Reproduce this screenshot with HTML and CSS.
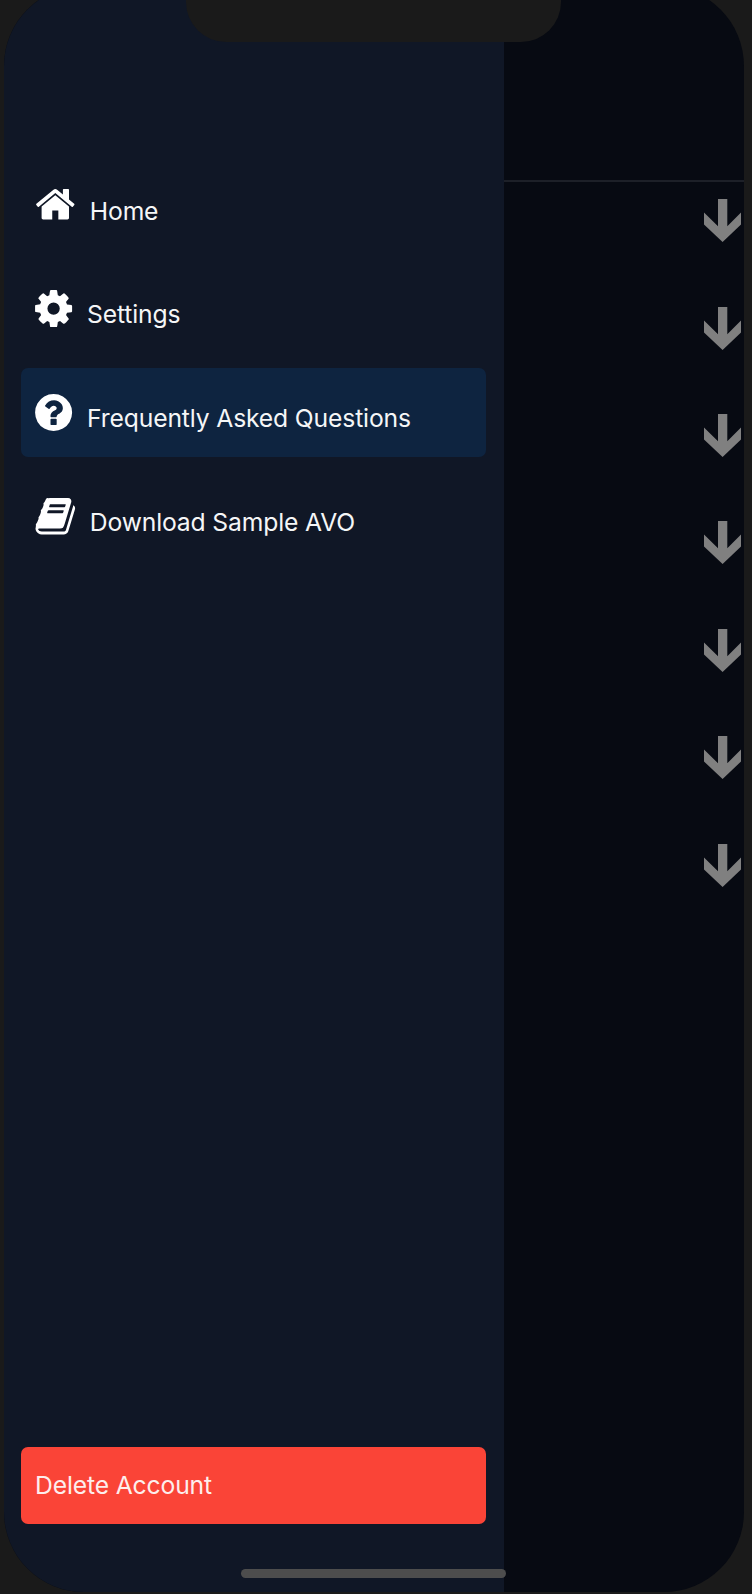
FILE: index.html
```html
<!DOCTYPE html>
<html lang="en">
<head>
<meta charset="utf-8">
<title>Menu</title>
<link rel="stylesheet" href="styles.css">
</head>
<body>
<svg class="defs" width="0" height="0"><defs><path id="arrow" d="M14 0h9.300v27.200L37 13.600v11.900L18.600 43 0 25.500V13.600l14 13.600z"/></defs></svg>
<div class="device">
  <div class="screen">
    <nav class="drawer">
      <ul class="menu">
        <li class="item wide">
          <svg class="icon" viewBox="0 0 1792 1792"><path d="M1472 992v480q0 26-19 45t-45 19h-384v-384h-256v384h-384q-26 0-45-19t-19-45v-480q0-1 .5-3t.5-3l575-474 575 474q1 2 1 6zm223-69l-62 74q-8 9-21 11h-3q-13 0-21-7l-692-577-692 577q-12 8-24 7-13-2-21-11l-62-74q-8-10-7-23.500t11-21.500l719-599q32-26 76-26t76 26l244 204v-195q0-14 9-23t23-9h192q14 0 23 9t9 23v408l219 182q10 8 11 21.500t-7 23.500z"/></svg>
          <span class="label">Home</span>
        </li>
        <li class="item">
          <svg class="icon" viewBox="0 0 1792 1792"><path d="M1152 896q0-106-75-181t-181-75-181 75-75 181 75 181 181 75 181-75 75-181zm512-109v222q0 12-8 23t-20 13l-185 28q-19 54-39 91 35 50 107 138 10 12 10 25t-9 23q-27 37-99 108t-94 71q-12 0-26-9l-138-108q-44 23-91 38-16 136-29 186-7 28-36 28h-222q-14 0-24.500-8.500t-11.500-21.500l-28-184q-49-16-90-37l-141 107q-10 9-25 9-14 0-25-11-126-114-165-168-7-10-7-23 0-12 8-23 15-21 51-66.500t54-70.500q-27-50-41-99l-183-27q-13-2-21-12.500t-8-23.500v-222q0-12 8-23t19-13l186-28q14-46 39-92-40-57-107-138-10-12-10-24 0-10 9-23 26-36 98.500-107.500t94.500-71.500q13 0 26 10l138 107q44-23 91-38 16-136 29-186 7-28 36-28h222q14 0 24.500 8.500t11.500 21.500l28 184q49 16 90 37l142-107q9-9 24-9 13 0 25 10 129 119 165 170 7 8 7 22 0 12-8 23-15 21-51 66.500t-54 70.500q26 50 41 98l183 28q13 2 21 12.500t8 23.500z"/></svg>
          <span class="label">Settings</span>
        </li>
        <li class="item active">
          <svg class="icon" viewBox="0 0 1792 1792"><path d="M1024 1376v-192q0-14-9-23t-23-9h-192q-14 0-23 9t-9 23v192q0 14 9 23t23 9h192q14 0 23-9t9-23zm256-672q0-88-55.500-163t-138.500-116-170-41q-243 0-371 213-15 24 8 42l132 100q7 6 19 6 16 0 25-12 53-68 86-92 34-24 86-24 48 0 85.500 26t37.500 59q0 38-20 61t-68 45q-63 28-115.500 86.500t-52.500 125.500v36q0 14 9 23t23 9h192q14 0 23-9t9-23q0-19 21.500-49.500t54.500-49.500q32-18 49-28.500t46-35 44.500-48 28-60.500 12.500-81zm384 192q0 209-103 385.500t-279.500 279.500-385.500 103-385.500-103-279.500-279.500-103-385.500 103-385.500 279.500-279.500 385.500-103 385.500 103 279.500 279.500 103 385.500z"/></svg>
          <span class="label">Frequently Asked Questions</span>
        </li>
        <li class="item wide">
          <svg class="icon" viewBox="0 0 1792 1792"><path d="M1703 478q40 57 18 129l-275 906q-19 64-76.500 107.500t-122.500 43.500h-923q-77 0-148.500-53.500t-99.500-131.500q-24-67-2-127 0-4 3-27t4-37q1-8-3-21.500t-3-19.500q2-11 8-21t16.500-23.500 16.500-23.500q23-38 45-91.500t30-91.500q3-10 .5-30t-.5-28q3-11 17-28t17-23q21-36 42-92t25-90q1-9-2.500-32t.5-28q4-13 22-30.500t22-22.500q19-26 42.500-84.500t27.500-96.500q1-8-3-25.500t-2-26.500q2-8 9-18t18-23 17-21q8-12 16.500-30.500t15-35 16-36 19.500-32 26.500-23.500 36-11.500 47.500 5.500l-1 3q38-9 51-9h761q74 0 114 56t18 130l-274 906q-36 119-71.500 153.500t-128.500 34.500h-869q-27 0-38 15-11 16-1 43 24 70 144 70h923q29 0 56-15.500t35-41.500l300-987q7-22 5-57 38 15 59 43zm-1064 2q-4 13 2 22.500t20 9.500h608q13 0 25.500-9.500t16.500-22.500l21-64q4-13-2-22.500t-20-9.500h-608q-13 0-25.500 9.500t-16.500 22.500zm-83 256q-4 13 2 22.500t20 9.500h608q13 0 25.500-9.500t16.500-22.500l21-64q4-13-2-22.500t-20-9.500h-608q-13 0-25.500 9.500t-16.500 22.500z"/></svg>
          <span class="label">Download Sample AVO</span>
        </li>
      </ul>
      <button class="delete">Delete Account</button>
    </nav>
    <main class="page">
      <header class="bar"></header>
      <div class="arrows">
        <svg class="arrow" viewBox="0 0 37 43"><use href="#arrow"/></svg>
        <svg class="arrow" viewBox="0 0 37 43"><use href="#arrow"/></svg>
        <svg class="arrow" viewBox="0 0 37 43"><use href="#arrow"/></svg>
        <svg class="arrow" viewBox="0 0 37 43"><use href="#arrow"/></svg>
        <svg class="arrow" viewBox="0 0 37 43"><use href="#arrow"/></svg>
        <svg class="arrow" viewBox="0 0 37 43"><use href="#arrow"/></svg>
        <svg class="arrow" viewBox="0 0 37 43"><use href="#arrow"/></svg>
      </div>
    </main>
  </div>
  <div class="notch"></div>
  <div class="home-indicator"></div>
</div>
</body>
</html>
```
FILE: styles.css
```css
* { box-sizing: border-box; }
body {
  margin: 0;
  background: #1a1a1a;
  color: #f5f6f7;
  font-family: Inter, "Liberation Sans", sans-serif;
}
.defs { display: block; }
.device {
  position: relative;
  height: 1594px;
  overflow: hidden;
}
.screen {
  display: flex;
  width: 740.500px;
  height: 1606px;
  margin: -14px 0 0 3.500px;
  border-radius: 80px;
  overflow: hidden;
  background: #070a12;
}
.drawer {
  display: flex;
  flex-direction: column;
  justify-content: space-between;
  width: 500.500px;
  padding: 174.200px 18px 68.500px 17.500px;
  background: #101726;
}
.menu {
  display: flex;
  flex-direction: column;
  gap: 14.500px;
  margin: 0;
  padding: 0;
  list-style: none;
}
.item {
  display: flex;
  align-items: flex-start;
  gap: 12px;
  height: 89.300px;
  padding: 23.200px 0 0 10.900px;
  border-radius: 7px;
}
.item.wide { gap: 13px; padding-left: 13.200px; }
.item.active { background: #0e2440; }
.icon {
  flex: none;
  width: 43.200px;
  height: 43.200px;
  fill: #fff;
}
.item.wide .icon { width: 42.600px; height: 42.600px; }
.label {
  margin-top: 11.300px;
  font-size: 24.700px;
  line-height: 32px;
  letter-spacing: -0.150px;
  white-space: nowrap;
}
.delete {
  height: 76.500px;
  padding: 0 0 0 14px;
  border: 0;
  border-radius: 7px;
  background: #fa4437;
  color: #fdeeed;
  font: 24.700px/32px Inter, "Liberation Sans", sans-serif;
  letter-spacing: -0.150px;
  text-align: left;
}
.page { flex: 1; }
.bar {
  height: 196px;
  border-bottom: 2px solid #1d2028;
}
.arrows {
  display: flex;
  flex-direction: column;
  align-items: flex-end;
  gap: 64.400px;
  padding: 17.200px 3px 0 0;
}
.arrow {
  display: block;
  width: 37px;
  height: 43px;
  fill: #808080;
}
.notch {
  position: absolute;
  top: -20px;
  left: 186px;
  width: 375px;
  height: 61.500px;
  border-radius: 0 0 40px 40px;
  background: #1a1a1a;
}
.home-indicator {
  position: absolute;
  top: 1568.500px;
  left: 241px;
  width: 265px;
  height: 9px;
  border-radius: 5px;
  background: #4d4d4d;
}
```
